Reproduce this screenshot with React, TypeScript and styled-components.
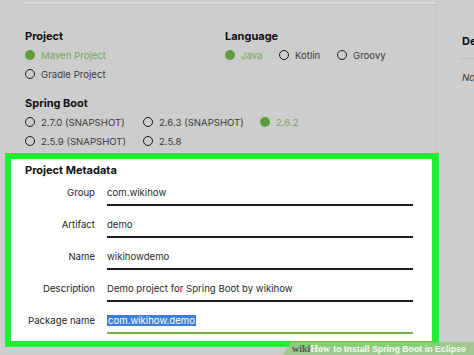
import React from "react";
import styled, { createGlobalStyle } from "styled-components";

const Global = createGlobalStyle`
  html, body { margin: 0; padding: 0; }
  body { background: #cdcdcd; font-family: Inter, "Open Sans", sans-serif; }
  #root { width: 474px; height: 355px; overflow: hidden; position: relative; }
`;

const Page = styled.div`
  display: flex;
  width: 474px;
  height: 355px;
  background: #cdcdcd;
  position: relative;
  overflow: hidden;
`;

const Main = styled.div`
  width: 436px;
  flex: none;
  display: flex;
  flex-direction: column;
  border-right: 1px solid #c4c4c4;
`;

const TopRule = styled.div`
  height: 2px;
  margin: 2px 0 0 24px;
  background: #dadada;
  border-bottom: 1px solid #c2c2c2;
`;

const Options = styled.div`
  display: grid;
  grid-template-columns: 200px 1fr;
  padding: 24px 0 0 25px;
`;

const Section = styled.div<{ $span?: boolean }>`
  display: flex;
  flex-direction: column;
  grid-column: ${(p) => (p.$span ? "1 / span 2" : "auto")};
  margin-top: ${(p) => (p.$span ? "15px" : "0")};
`;

const Heading = styled.div`
  font-size: 11px;
  font-weight: 700;
  color: #111;
  line-height: 14px;
  height: 14px;
  white-space: nowrap;
`;

const RadioRow = styled.div`
  display: flex;
  margin-top: 5px;
  height: 14px;
  align-items: center;
`;

const Radio = styled.div<{ $w?: number }>`
  display: flex;
  align-items: center;
  gap: 6px;
  width: ${(p) => (p.$w ? `${p.$w}px` : "auto")};
  flex: none;
`;

const Dot = styled.span<{ $on?: boolean }>`
  box-sizing: border-box;
  width: 10px;
  height: 10px;
  border-radius: 50%;
  background: ${(p) => (p.$on ? "#5f9a3c" : "transparent")};
  border: ${(p) => (p.$on ? "none" : "1.7px solid #1a1a1a")};
  flex: none;
`;

const RadioLabel = styled.span<{ $on?: boolean }>`
  font-size: 9.6px;
  color: ${(p) => (p.$on ? "#79a460" : "#3a3a3a")};
  white-space: nowrap;
`;

const MetaBox = styled.div`
  margin: 5px -3px 0 5px;
  height: 177px;
  border: 6px solid #20ee35;
  border-right-width: 7px;
  background: #ffffff;
  padding: 5px 0 0 14px;
  display: flex;
  flex-direction: column;
`;

const MetaTitle = styled(Heading)`
  height: 12px;
  line-height: 12px;
  margin-bottom: 10px;
`;

const Form = styled.div`
  display: grid;
  grid-template-columns: 70px 306px;
  column-gap: 12px;
  row-gap: 12px;
`;

const Label = styled.div`
  font-size: 9.6px;
  color: #222;
  text-align: right;
  line-height: 14px;
  white-space: nowrap;
`;

const Field = styled.div<{ $active?: boolean }>`
  display: flex;
  flex-direction: column;
  gap: 4px;
  &::after {
    content: "";
    height: 2px;
    background: ${(p) => (p.$active ? "#79b04d" : "#1c1c1c")};
  }
`;

const Value = styled.div`
  font-size: 9.6px;
  color: #2a2a2a;
  line-height: 14px;
  white-space: nowrap;
`;

const Selected = styled.span`
  background: #3f7ed8;
  color: #ffffff;
  padding: 0 1px;
`;

const Side = styled.div`
  flex: 1;
  min-width: 0;
  display: flex;
  flex-direction: column;
  padding: 34px 0 0 25px;
`;

const SideRule = styled.div`
  height: 1px;
  background: #bdbdbd;
  margin: 10px 0 0 -2px;
`;

const SideNote = styled.div`
  margin-top: 13px;
  font-size: 9.6px;
  font-style: italic;
  color: #333;
  white-space: nowrap;
`;

const Watermark = styled.div`
  position: absolute;
  right: 0;
  bottom: 0;
  height: 13px;
  width: 191px;
  background: rgba(150, 200, 130, 0.85);
  clip-path: polygon(8px 0, 100% 0, 100% 100%, 0 100%);
  display: flex;
  align-items: center;
  padding-left: 9px;
  box-sizing: border-box;
  font-size: 8.8px;
  font-weight: 700;
  color: #f4fbef;
  white-space: nowrap;
  font-family: "Liberation Sans", Arial, sans-serif;
`;

const Wiki = styled.span`
  font-family: "Liberation Serif", "DejaVu Serif", serif;
  color: #555;
  font-weight: 700;
  font-size: 10px;
`;

const How = styled.span`
  font-family: "Liberation Serif", "DejaVu Serif", serif;
  font-weight: 700;
  font-size: 10px;
  margin-right: 3px;
`;

const fields: { label: string; value: string; active?: boolean }[] = [
  { label: "Group", value: "com.wikihow" },
  { label: "Artifact", value: "demo" },
  { label: "Name", value: "wikihowdemo" },
  { label: "Description", value: "Demo project for Spring Boot by wikihow" },
  { label: "Package name", value: "com.wikihow.demo", active: true },
];

export default function App() {
  return (
    <>
      <Global />
      <Page>
        <Main>
          <TopRule />
          <Options>
            <Section>
              <Heading>Project</Heading>
              <RadioRow>
                <Radio>
                  <Dot $on />
                  <RadioLabel $on>Maven Project</RadioLabel>
                </Radio>
              </RadioRow>
              <RadioRow>
                <Radio>
                  <Dot />
                  <RadioLabel>Gradle Project</RadioLabel>
                </Radio>
              </RadioRow>
            </Section>
            <Section>
              <Heading>Language</Heading>
              <RadioRow>
                <Radio $w={54}>
                  <Dot $on />
                  <RadioLabel $on>Java</RadioLabel>
                </Radio>
                <Radio $w={58}>
                  <Dot />
                  <RadioLabel>Kotlin</RadioLabel>
                </Radio>
                <Radio>
                  <Dot />
                  <RadioLabel>Groovy</RadioLabel>
                </Radio>
              </RadioRow>
            </Section>
            <Section $span>
              <Heading>Spring Boot</Heading>
              <RadioRow>
                <Radio $w={118}>
                  <Dot />
                  <RadioLabel>2.7.0 (SNAPSHOT)</RadioLabel>
                </Radio>
                <Radio $w={117}>
                  <Dot />
                  <RadioLabel>2.6.3 (SNAPSHOT)</RadioLabel>
                </Radio>
                <Radio>
                  <Dot $on />
                  <RadioLabel $on>2.6.2</RadioLabel>
                </Radio>
              </RadioRow>
              <RadioRow>
                <Radio $w={118}>
                  <Dot />
                  <RadioLabel>2.5.9 (SNAPSHOT)</RadioLabel>
                </Radio>
                <Radio>
                  <Dot />
                  <RadioLabel>2.5.8</RadioLabel>
                </Radio>
              </RadioRow>
            </Section>
          </Options>
          <MetaBox>
            <MetaTitle>Project Metadata</MetaTitle>
            <Form>
              {fields.map((f) => (
                <React.Fragment key={f.label}>
                  <Label>{f.label}</Label>
                  <Field $active={f.active}>
                    <Value>{f.active ? <Selected>{f.value}</Selected> : f.value}</Value>
                  </Field>
                </React.Fragment>
              ))}
            </Form>
          </MetaBox>
        </Main>
        <Side>
          <Heading>Dependencies</Heading>
          <SideRule />
          <SideNote>No dependency selected</SideNote>
        </Side>
        <Watermark>
          <Wiki>wiki</Wiki>
          <How>How</How>
          to Install Spring Boot in Eclipse
        </Watermark>
      </Page>
    </>
  );
}
